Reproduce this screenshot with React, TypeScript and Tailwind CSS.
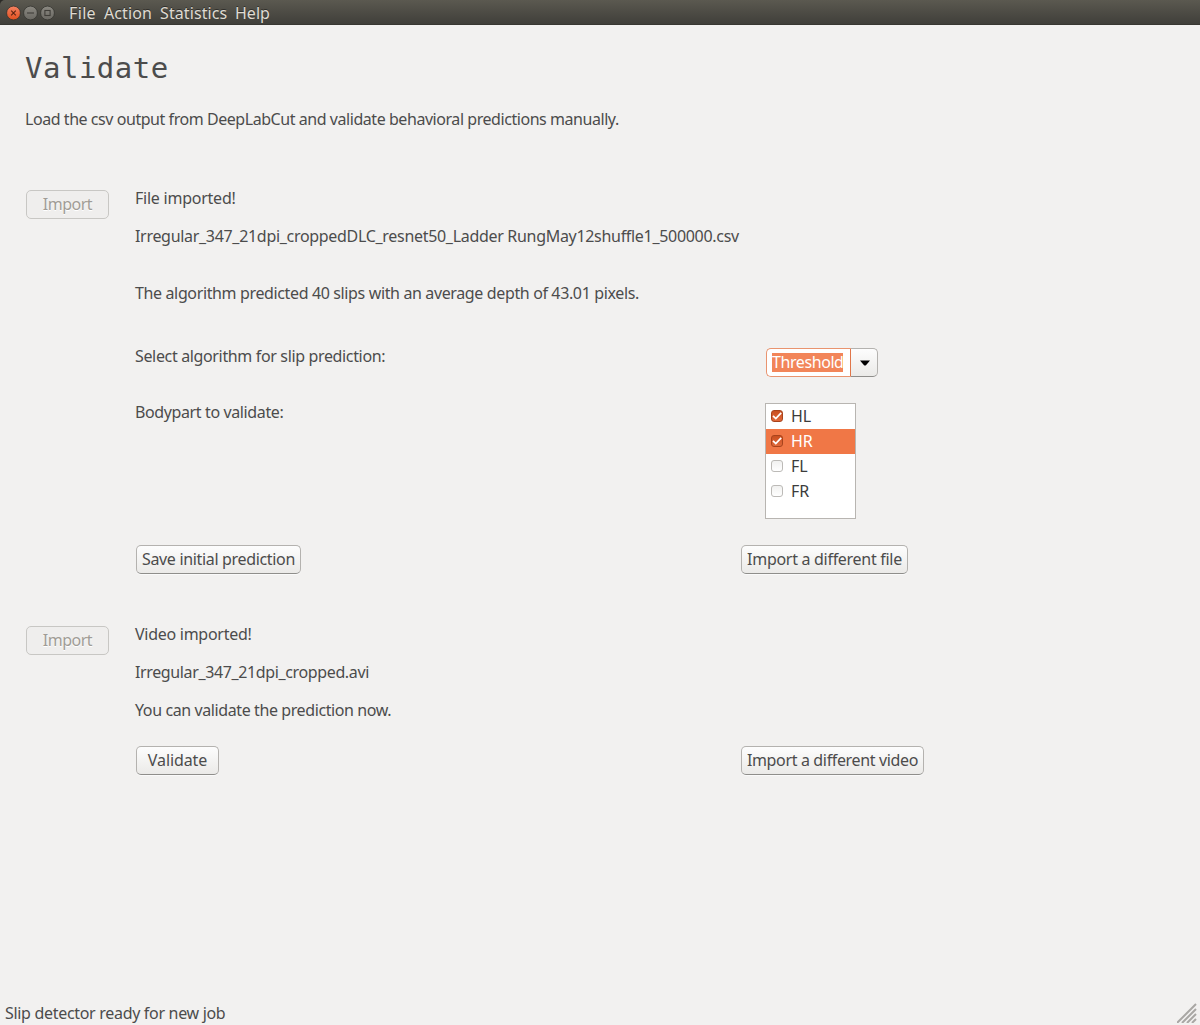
import type { ReactNode } from "react";

const LINE = "h-5 leading-5 whitespace-nowrap";

function Line({ className, children }: { className: string; children: ReactNode }) {
  return <p className={`${LINE} ${className}`}>{children}</p>;
}

function Button({ className, children }: { className: string; children: ReactNode }) {
  return (
    <button
      className={`flex h-[29px] items-center justify-center rounded-[5px] border border-[#b4b2af] border-b-[#8f8e8b] bg-linear-to-b from-[#fdfdfd] to-[#ebeae8] pb-[2px] leading-5 whitespace-nowrap shadow-[0_1px_0_#fafafa] ${className}`}
    >
      {children}
    </button>
  );
}

function DisabledImport() {
  return (
    <button
      disabled
      className="mt-[2px] ml-[26px] flex h-[29px] w-[83px] items-center justify-center rounded-[5px] border border-[#c8c7c4] bg-[#efeeed] pb-[2px] leading-5 tracking-[-0.5px] text-[#a09c96] [text-shadow:0_1px_0_#fff]"
    >
      Import
    </button>
  );
}

function WindowButtons() {
  return (
    <svg width="50" height="16" viewBox="0 0 50 16" className="mt-px ml-[6px]">
      <defs>
        <linearGradient id="close" x1="0" y1="0" x2="0" y2="1">
          <stop offset="0" stopColor="#f58262" />
          <stop offset="1" stopColor="#e2501f" />
        </linearGradient>
        <linearGradient id="neutral" x1="0" y1="0" x2="0" y2="1">
          <stop offset="0" stopColor="#8b8982" />
          <stop offset="1" stopColor="#6a6862" />
        </linearGradient>
      </defs>
      <g stroke="#34332e" strokeWidth="0.8">
        <circle cx="7.5" cy="8" r="6.9" fill="url(#close)" />
        <circle cx="24.5" cy="8" r="6.9" fill="url(#neutral)" />
        <circle cx="41.5" cy="8" r="6.9" fill="url(#neutral)" />
      </g>
      <g fill="none" stroke="#403e39" strokeWidth="1.1">
        <path d="M5.2 5.7l4.6 4.6M9.8 5.7l-4.6 4.6" stroke="#5c2412" />
        <path d="M21 8h7" />
        <rect x="38.9" y="5.5" width="5.2" height="5" />
      </g>
    </svg>
  );
}

function Check({ checked }: { checked: boolean }) {
  return checked ? (
    <span className="flex h-3 w-3 items-center justify-center rounded-[3px] border border-[#a8431c] bg-linear-to-b from-[#c94f20] to-[#e0693a]">
      <svg width="10" height="10" viewBox="0 0 10 10" fill="none" stroke="#fff" strokeWidth="1.7" className="shrink-0">
        <path d="M1 4.8l2.8 2.8L9.2 1.8" />
      </svg>
    </span>
  ) : (
    <span className="h-3 w-3 rounded-[3px] border border-[#bcbab7] bg-linear-to-b from-[#f1f1f0] to-white" />
  );
}

const PARTS = [
  { name: "HL", checked: true, selected: false },
  { name: "HR", checked: true, selected: true },
  { name: "FL", checked: false, selected: false },
  { name: "FR", checked: false, selected: false },
];

export default function App() {
  return (
    <div className="flex h-[1025px] w-[1200px] flex-col overflow-hidden bg-[#f2f1f0] text-[16px] text-[#4c4c4c] [font-family:'Noto_Sans',sans-serif]">
      <div className="h-[25px] shrink-0 bg-[#2b2a27]">
        <header className="flex h-[25px] items-center rounded-tl-[5px] border-b border-[#383732] bg-linear-to-b from-[#5b5950] to-[#403f3a] text-[#dfdbd2] [text-shadow:0_-1px_0_#302f2b]">
          <WindowButtons />
          <nav className="flex pt-[2px] leading-5 whitespace-nowrap">
            <span className="ml-[13px] w-[35px] tracking-[0.35px]">File</span>
            <span className="w-[56px] tracking-[0.1px]">Action</span>
            <span className="w-[75px] tracking-[0.1px]">Statistics</span>
            <span>Help</span>
          </nav>
        </header>
      </div>

      <main className="flex-1">
        <h1 className="mt-[25px] ml-[25px] h-9 text-[29px] leading-9 tracking-[0.5px] [font-family:'DejaVu_Sans_Mono',monospace]">
          Validate
        </h1>
        <Line className="mt-[23px] ml-[25px] tracking-[-0.446px]">
          Load the csv output from DeepLabCut and validate behavioral predictions manually.
        </Line>

        <section className="mt-[59px] grid grid-cols-[135px_606px_1fr]">
          <DisabledImport />
          <div className="col-span-2">
            <Line className="tracking-[-0.24px]">File imported!</Line>
            <Line className="mt-[18px] tracking-[-0.306px]">
              Irregular_347_21dpi_croppedDLC_resnet50_Ladder RungMay12shuffle1_500000.csv
            </Line>
            <Line className="mt-[37px] tracking-[-0.366px]">
              The algorithm predicted 40 slips with an average depth of 43.01 pixels.
            </Line>
          </div>

          <Line className="col-start-2 mt-[43px] tracking-[-0.35px]">Select algorithm for slip prediction:</Line>
          <div className="mt-[45px] ml-[25px] flex h-[29px] w-[112px]">
            <div className="flex w-[85px] items-center rounded-l-[5px] border border-[#e9946f] border-r-[#e0764a] bg-white pb-px pl-[5px]">
              <span className="h-[19px] w-[71px] bg-[#f28559] leading-[19px] tracking-[-0.42px] whitespace-nowrap text-white">
                Threshold
              </span>
            </div>
            <button className="flex w-[27px] items-center justify-center rounded-r-[5px] border border-l-0 border-[#b4b2af] border-b-[#8f8e8b] bg-linear-to-b from-[#fdfdfd] to-[#ebeae8] pl-[2px]">
              <svg width="10" height="6" viewBox="0 0 10 6">
                <path d="M0 .5h10L6 5.2Q5 6 4 5.2z" fill="#000" />
              </svg>
            </button>
          </div>

          <Line className="col-start-2 mt-[25px] tracking-[-0.38px]">Bodypart to validate:</Line>
          <ul className="mt-[26px] ml-[24px] h-[116px] w-[91px] border border-[#b8b5b1] bg-white text-[#3c3c3c]">
            {PARTS.map((p) => (
              <li
                key={p.name}
                className={`flex h-[25px] items-center gap-2 pb-[2px] pl-[5px] leading-5 ${p.selected ? "bg-[#f07746] text-white" : ""}`}
              >
                <Check checked={p.checked} />
                {p.name}
              </li>
            ))}
          </ul>

          <Button className="col-start-2 mt-[26px] ml-px w-[165px] tracking-[-0.33px]">Save initial prediction</Button>
          <Button className="mt-[26px] w-[167px] tracking-[-0.29px]">Import a different file</Button>
        </section>

        <section className="mt-[50px] grid grid-cols-[135px_606px_1fr]">
          <DisabledImport />
          <div className="col-span-2">
            <Line className="tracking-[-0.27px]">Video imported!</Line>
            <Line className="mt-[18px] tracking-[-0.37px]">Irregular_347_21dpi_cropped.avi</Line>
            <Line className="mt-[18px] tracking-[-0.4px]">You can validate the prediction now.</Line>
          </div>
          <Button className="col-start-2 mt-[26px] ml-px w-[83px] tracking-[-0.1px]">Validate</Button>
          <Button className="mt-[26px] w-[183px] tracking-[-0.35px]">Import a different video</Button>
        </section>
      </main>

      <footer className="flex h-[22px] items-start justify-between pr-[3px] pl-[5px]">
        <Line className="tracking-[-0.31px]">Slip detector ready for new job</Line>
        <svg width="20" height="20" viewBox="0 0 20 20" fill="none" stroke="#a9a7a4" strokeWidth="2">
          <path d="M0 20L19 1M5 20L19 6M10 20L19 11M15 20L19 16" />
        </svg>
      </footer>
    </div>
  );
}
